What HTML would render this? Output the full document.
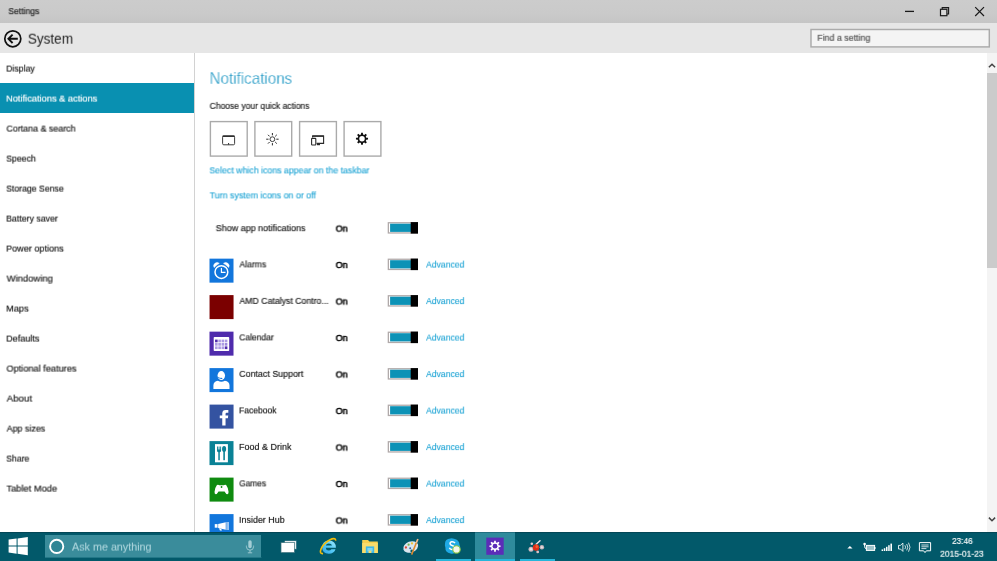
<!DOCTYPE html>
<html lang="en">
<head>
<meta charset="utf-8">
<title>Settings</title>
<style>
html,body{margin:0;padding:0}
body{width:997px;height:561px;overflow:hidden;background:#fff;position:relative;font-family:"Liberation Sans",sans-serif}
.a{position:absolute}
.t{position:absolute;left:0;top:0;white-space:pre;line-height:1;transform-origin:0 0;display:block;will-change:transform}
.t i{display:inline-block;font-style:normal;transform-origin:0 0}
svg{position:absolute;overflow:visible}
#titlebar{left:0;top:0;width:997px;height:23px;background:linear-gradient(#cccccc,#cacaca 60%,#c5c5c5)}
#header{left:0;top:23px;width:997px;height:30px;background:#e6e6e6}
#sidebar{left:0;top:53px;width:194px;height:479px;background:#fff;border-right:1px solid #d2d2d2}
#sel{left:0;top:83px;width:194px;height:30px;background:#0990b1}
#sbtrack{left:987px;top:53px;width:10px;height:479px;background:#f4f4f4}
#sbthumb{left:987px;top:73px;width:10px;height:195px;background:#cbcbcb}
#taskbar{left:0;top:532px;width:997px;height:29px;background:#02596a}
#cortana{left:45px;top:535px;width:216px;height:22px;background:#3a8c9b}
#tbactive{left:475px;top:532px;width:40px;height:29px;background:#2f8b9c}
.ul{position:absolute;top:559px;height:2px;background:#25b6da}
</style>
</head>
<body>
<!-- window chrome -->
<div id="titlebar" class="a"></div>
<div id="header" class="a"></div>
<svg style="left:800px;top:23px" width="197" height="30" viewBox="800 23 197 30"><rect x="811" y="29.5" width="178.3" height="17.4" fill="#f4f4f4" stroke="#ababab" stroke-width="1.45"/></svg>
<!-- window buttons -->
<svg style="left:900px;top:0" width="97" height="23" viewBox="900 0 97 23">
  <path d="M905 11.4H914" stroke="#1a1a1a" stroke-width="1.3" fill="none"/>
  <path d="M942.2 9.2V7.6H948.6V14H947" stroke="#1a1a1a" stroke-width="1.1" fill="none"/>
  <rect x="940.5" y="9.3" width="6.4" height="6.4" stroke="#1a1a1a" stroke-width="1.2" fill="#d8d8d8"/>
  <path d="M975.2 7.2L984 16M984 7.2L975.2 16" stroke="#1a1a1a" stroke-width="1.2" fill="none"/>
</svg>
<!-- back button -->
<svg style="left:0;top:23px" width="30" height="30" viewBox="0 23 30 30">
  <circle cx="12.8" cy="38.8" r="8" fill="none" stroke="#111" stroke-width="1.7"/>
  <path d="M8.6 38.8H17.8M12.6 34.6L8.4 38.8L12.6 43" fill="none" stroke="#111" stroke-width="1.9"/>
</svg>

<!-- sidebar -->
<div id="sidebar" class="a"></div>
<div id="sel" class="a"></div>

<!-- scrollbar -->
<div id="sbtrack" class="a"></div>
<div id="sbthumb" class="a"></div>
<svg style="left:987px;top:53px" width="10" height="478" viewBox="987 53 10 478">
  <path d="M988.9 67.3L992 64.2L995.1 67.3" fill="none" stroke="#444" stroke-width="1.5"/>
  <path d="M988.9 517.6L992 520.7L995.1 517.6" fill="none" stroke="#444" stroke-width="1.5"/>
</svg>

<!-- quick actions -->
<svg style="left:205px;top:115px" width="180" height="47" viewBox="205 115 180 47">
  <rect x="210.4" y="121.6" width="36.8" height="34.5" fill="#fff" stroke="#aaaaaa" stroke-width="1.4"/>
  <rect x="254.9" y="121.6" width="36.8" height="34.5" fill="#fff" stroke="#aaaaaa" stroke-width="1.4"/>
  <rect x="299.6" y="121.6" width="36.8" height="34.5" fill="#fff" stroke="#aaaaaa" stroke-width="1.4"/>
  <rect x="344.1" y="121.6" width="36.8" height="34.5" fill="#fff" stroke="#aaaaaa" stroke-width="1.4"/>
  <!-- tablet -->
  <rect x="222.6" y="136" width="12" height="8.8" rx="1.2" fill="none" stroke="#333" stroke-width="0.95"/>
  <path d="M222.6 136.2H234.6" stroke="#2a2a2a" stroke-width="1.5"/>
  <path d="M228.6 143V144.6" stroke="#2a2a2a" stroke-width="1"/>
  <!-- brightness -->
  <g stroke="#2a2a2a" stroke-width="1" fill="none">
    <circle cx="272.4" cy="139.2" r="2.4" stroke-width="0.9"/>
    <path d="M272.4 133V135.3M272.4 143.1V145.4M266.2 139.2H268.5M276.3 139.2H278.6M268 134.8L269.6 136.4M275.2 142L276.8 143.6M276.8 134.8L275.2 136.4M269.6 142L268 143.6"/>
  </g>
  <!-- connect -->
  <g stroke="#2a2a2a" fill="none">
    <path d="M312.6 137.5V136H323.6V143.4H316.6" stroke-width="1.1"/>
    <path d="M312.4 136.1H323.8" stroke-width="1.5"/>
    <rect x="311.6" y="138.4" width="4.2" height="6.6" rx="0.6" stroke-width="1.1" fill="#fff"/>
    <path d="M317 144.6H320" stroke-width="1.2"/>
  </g>
  <!-- gear -->
  <path d="M360.94 134.43L361.14 132.66L362.86 132.66L363.06 134.43L364.27 134.93L365.66 133.82L366.88 135.04L365.77 136.43L366.27 137.64L368.04 137.84L368.04 139.56L366.27 139.76L365.77 140.97L366.88 142.36L365.66 143.58L364.27 142.47L363.06 142.97L362.86 144.74L361.14 144.74L360.94 142.97L359.73 142.47L358.34 143.58L357.12 142.36L358.23 140.97L357.73 139.76L355.96 139.56L355.96 137.84L357.73 137.64L358.23 136.43L357.12 135.04L358.34 133.82L359.73 134.93Z" fill="#111"/>
  <circle cx="362" cy="138.7" r="2.75" fill="#fff"/>
</svg>

<!-- toggles -->
<svg style="left:380px;top:215px" width="45" height="316" viewBox="380 215 45 316">
  <g transform="translate(0 222.1)"><rect x="387.7" y="0" width="30.3" height="11.5" fill="#b1aaaa"/><rect x="389" y="1.3" width="22" height="8.9" fill="#fff"/><rect x="390.1" y="1.6" width="21" height="8.2" fill="#0c92b6"/><rect x="410.7" y="0" width="7.3" height="11.5" fill="#000"/></g>
  <g transform="translate(0 258.6)"><rect x="387.7" y="0" width="30.3" height="11.5" fill="#b1aaaa"/><rect x="389" y="1.3" width="22" height="8.9" fill="#fff"/><rect x="390.1" y="1.6" width="21" height="8.2" fill="#0c92b6"/><rect x="410.7" y="0" width="7.3" height="11.5" fill="#000"/></g>
  <g transform="translate(0 295.1)"><rect x="387.7" y="0" width="30.3" height="11.5" fill="#b1aaaa"/><rect x="389" y="1.3" width="22" height="8.9" fill="#fff"/><rect x="390.1" y="1.6" width="21" height="8.2" fill="#0c92b6"/><rect x="410.7" y="0" width="7.3" height="11.5" fill="#000"/></g>
  <g transform="translate(0 331.6)"><rect x="387.7" y="0" width="30.3" height="11.5" fill="#b1aaaa"/><rect x="389" y="1.3" width="22" height="8.9" fill="#fff"/><rect x="390.1" y="1.6" width="21" height="8.2" fill="#0c92b6"/><rect x="410.7" y="0" width="7.3" height="11.5" fill="#000"/></g>
  <g transform="translate(0 368.1)"><rect x="387.7" y="0" width="30.3" height="11.5" fill="#b1aaaa"/><rect x="389" y="1.3" width="22" height="8.9" fill="#fff"/><rect x="390.1" y="1.6" width="21" height="8.2" fill="#0c92b6"/><rect x="410.7" y="0" width="7.3" height="11.5" fill="#000"/></g>
  <g transform="translate(0 404.6)"><rect x="387.7" y="0" width="30.3" height="11.5" fill="#b1aaaa"/><rect x="389" y="1.3" width="22" height="8.9" fill="#fff"/><rect x="390.1" y="1.6" width="21" height="8.2" fill="#0c92b6"/><rect x="410.7" y="0" width="7.3" height="11.5" fill="#000"/></g>
  <g transform="translate(0 441.1)"><rect x="387.7" y="0" width="30.3" height="11.5" fill="#b1aaaa"/><rect x="389" y="1.3" width="22" height="8.9" fill="#fff"/><rect x="390.1" y="1.6" width="21" height="8.2" fill="#0c92b6"/><rect x="410.7" y="0" width="7.3" height="11.5" fill="#000"/></g>
  <g transform="translate(0 477.6)"><rect x="387.7" y="0" width="30.3" height="11.5" fill="#b1aaaa"/><rect x="389" y="1.3" width="22" height="8.9" fill="#fff"/><rect x="390.1" y="1.6" width="21" height="8.2" fill="#0c92b6"/><rect x="410.7" y="0" width="7.3" height="11.5" fill="#000"/></g>
  <g transform="translate(0 514.1)"><rect x="387.7" y="0" width="30.3" height="11.5" fill="#b1aaaa"/><rect x="389" y="1.3" width="22" height="8.9" fill="#fff"/><rect x="390.1" y="1.6" width="21" height="8.2" fill="#0c92b6"/><rect x="410.7" y="0" width="7.3" height="11.5" fill="#000"/></g>
</svg>

<!-- app icons -->
<svg style="left:205px;top:250px" width="40" height="281" viewBox="205 250 40 281">
  <!-- Alarms -->
  <g transform="translate(209.5 258.65)">
    <rect width="24" height="24" fill="#1276dc"/>
    <circle cx="11.9" cy="13.4" r="6.4" fill="none" stroke="#fff" stroke-width="1.5"/>
    <path d="M11.9 9.3V13.8H16" fill="none" stroke="#fff" stroke-width="1.15"/>
    <path d="M4.6 8.9A3.4 3.4 0 0 1 9.8 4.7Q7.4 6.2 4.6 8.9Z" fill="#fff" stroke="#fff" stroke-width="0.5"/>
    <path d="M19.2 8.9A3.4 3.4 0 0 0 14 4.7Q16.4 6.2 19.2 8.9Z" fill="#fff" stroke="#fff" stroke-width="0.5"/>
  </g>
  <!-- AMD -->
  <g transform="translate(209.55 295.1)"><rect width="24" height="24" fill="#7b0000"/></g>
  <!-- Calendar -->
  <g transform="translate(209.5 331.65)">
    <rect width="24" height="24" fill="#4f2bac"/>
    <rect x="4.2" y="5.3" width="15.5" height="14" rx="0.8" fill="#fff"/>
    <rect x="5.55" y="7.95" width="2.6" height="2.7" fill="#4f2bac"/><rect x="8.80" y="7.95" width="2.6" height="2.7" fill="#ab9be3"/><rect x="12.05" y="7.95" width="2.6" height="2.7" fill="#ab9be3"/><rect x="15.30" y="7.95" width="2.6" height="2.7" fill="#ab9be3"/><rect x="5.55" y="11.35" width="2.6" height="2.7" fill="#ab9be3"/><rect x="8.80" y="11.35" width="2.6" height="2.7" fill="#ab9be3"/><rect x="12.05" y="11.35" width="2.6" height="2.7" fill="#ab9be3"/><rect x="15.30" y="11.35" width="2.6" height="2.7" fill="#9d8adb"/><rect x="5.55" y="14.75" width="2.6" height="2.7" fill="#ab9be3"/><rect x="8.80" y="14.75" width="2.6" height="2.7" fill="#ab9be3"/><rect x="12.05" y="14.75" width="2.6" height="2.7" fill="#ab9be3"/><rect x="15.30" y="14.75" width="2.6" height="2.7" fill="#4f2bac"/>
  </g>
  <!-- Contact Support -->
  <g transform="translate(209.5 368.1)">
    <rect width="24" height="24" fill="#1276dc"/>
    <path d="M3.9 20.9V17.2Q4.1 13.4 8.4 12.7Q11.8 14.6 15.4 12.7Q19.8 13.4 20 17.2V20.9Z" fill="#fff"/>
    <ellipse cx="11.8" cy="7.5" rx="3.75" ry="4.5" fill="#fff"/>
    <path d="M8.6 8.8Q9.2 10.4 11.6 10.3" stroke="#1276dc" stroke-width="0.8" fill="none"/>
    <ellipse cx="12" cy="10.3" rx="0.9" ry="0.7" fill="#1276dc"/>
  </g>
  <!-- Facebook -->
  <g transform="translate(209.55 404.6)">
    <rect width="24" height="24" fill="#3453a1"/>
    <path d="M12.7 21V13.7H10.2V10.9H12.7V8.8Q12.7 5.4 16.2 5.4H18.8V8.2H17Q16 8.2 16 9.3V10.9H18.7L18.3 13.7H16V21Z" fill="#fff"/>
  </g>
  <!-- Food & Drink -->
  <g transform="translate(209.5 441.1)">
    <rect width="24" height="24" fill="#0a8296"/>
    <rect x="5.5" y="3" width="12.9" height="18.2" fill="#fff"/>
    <g fill="#0a8296" transform="translate(-0.3 0.3)">
      <path d="M7.8 5H8.7V8.2H9.4V5H10.3V8.2H11V5H11.9V9.2Q11.9 10.6 10.6 10.9V18.8H9.1V10.9Q7.8 10.6 7.8 9.2Z"/>
      <ellipse cx="14.9" cy="7.6" rx="2.05" ry="2.9"/>
      <rect x="14.1" y="9.6" width="1.6" height="9.2"/>
    </g>
  </g>
  <!-- Games -->
  <g transform="translate(209.55 477.6)">
    <rect width="24" height="24" fill="#0f8b10"/>
    <path d="M7.4 7.4Q8.6 6.6 9.8 7.6H14.2Q15.4 6.6 16.6 7.4Q18.4 9.6 19 14.2Q19.2 16.4 17.8 16.6Q16.6 16.6 15 13.8H9Q7.4 16.6 6.2 16.6Q4.8 16.4 5 14.2Q5.6 9.6 7.4 7.4Z" fill="#fff"/>
    <circle cx="12" cy="9.4" r="0.9" fill="#0f8b10"/>
  </g>
  <!-- Insider Hub -->
  <g transform="translate(209.55 514.1)">
    <rect width="24" height="24" fill="#1276dc"/>
    <g fill="#fff">
      <path d="M5.2 10H8V13.6H5.2Z"/>
      <path d="M8.6 9.8L16.2 8.2V15.6L8.6 13.8Z"/>
      <path d="M17 8H18V15.8H17Z"/>
      <path d="M18.8 8H19.4V15.8H18.8Z"/>
      <path d="M9.4 14.2L10.4 16.4H12.4L11.6 14.6Z"/>
    </g>
  </g>
</svg>

<!-- taskbar -->
<div id="taskbar" class="a"></div>
<div id="cortana" class="a"></div>
<div id="tbactive" class="a"></div>
<div class="ul" style="left:436px;width:35px"></div>
<div class="ul" style="left:475px;width:40px"></div>
<div class="ul" style="left:520px;width:34.5px"></div>
<svg style="left:0;top:531px" width="997" height="30" viewBox="0 531 997 30">
  <rect x="0" y="532" width="997" height="1" fill="#034756"/>
  <rect x="0" y="533" width="997" height="1" fill="#03566a" opacity=".6"/>
  <rect x="475" y="532" width="40" height="1" fill="#226f80"/>
  <rect x="475" y="533" width="40" height="1" fill="#2f8b9c"/>
  <rect x="45" y="557" width="216.4" height="0.6" fill="#3a8c9b"/>
  <!-- windows logo -->
  <g fill="#fff">
    <path d="M8.6 539.6L16.6 538.5V545.6H8.6Z"/>
    <path d="M17.6 538.4L27.8 537V545.6H17.6Z"/>
    <path d="M8.6 546.6H16.6V553.7L8.6 552.6Z"/>
    <path d="M17.6 546.6H27.8V555.2L17.6 553.8Z"/>
  </g>
  <!-- cortana ring -->
  <circle cx="56.7" cy="546.4" r="6.6" fill="#2f8595" stroke="#fff" stroke-width="1.9"/>
  <!-- mic -->
  <g stroke="#a4cdd5" fill="none">
    <rect x="248.3" y="540.2" width="3.4" height="8" rx="1.7" fill="#a4cdd5" stroke="none"/>
    <path d="M246.4 545.6V546.6A3.6 3.6 0 0 0 253.6 546.6V545.6" stroke-width="0.9"/>
    <path d="M250 550.2V552.6M247.8 552.8H252.2" stroke-width="0.9"/>
  </g>
  <!-- task view -->
  <rect x="284.4" y="540.6" width="12.2" height="8.6" fill="#e9edee" stroke="#05596b" stroke-width="0.6"/>
  <rect x="281" y="542.6" width="13.4" height="10" fill="#fff" stroke="#3a6f7a" stroke-width="0.7"/>
  <!-- IE -->
  <defs><linearGradient id="ieg" x1="0" y1="1" x2="1" y2="0"><stop offset="0" stop-color="#2aa3ea"/><stop offset=".55" stop-color="#5bcdf7"/><stop offset="1" stop-color="#a6e8fb"/></linearGradient></defs>
  <g>
    <path transform="translate(0.9 0.9)" d="M335 546.9H324.8Q325 549.5 327.7 549.7Q329.6 549.7 330.5 548.3H334.6Q333.2 552.7 327.9 552.9Q321.2 552.5 321.2 546Q321.6 540 327.9 539.6Q335 539.8 335 546.9ZM324.9 544.5H331.1Q330.7 542.6 328 542.5Q325.4 542.6 324.9 544.5Z" fill="url(#ieg)"/>
    <path d="M323 553.6Q319 553.8 321.2 548.6Q323.8 543.2 329.6 540Q335.4 537 335.8 540.6" fill="none" stroke="#f4bd0c" stroke-width="1.6"/>
  </g>
  <!-- folder -->
  <g>
    <path d="M362.2 540H368L369.4 541.6H377.8V553H362.2Z" fill="#f7d04f"/>
    <path d="M362.2 543H377.8V553H362.2Z" fill="#f9dc6b"/>
    <rect x="365.8" y="546.4" width="8.4" height="6.6" fill="#3fb8e6"/>
    <rect x="367.4" y="548" width="5.2" height="3.4" fill="#7fd6f2"/>
    <rect x="368.6" y="550.6" width="2.8" height="2.4" fill="#f9dc6b"/>
  </g>
  <!-- paint -->
  <g>
    <ellipse cx="410.7" cy="547" rx="7.7" ry="5.5" transform="rotate(-20 410.7 547)" fill="#d9e5ee"/>
    <path d="M411 552.6Q409.4 550.4 411.6 549.6Q413.6 549.4 413.4 552Z" fill="#02596a"/>
    <circle cx="405.9" cy="547.5" r="1.15" fill="#e0483a"/>
    <circle cx="408.6" cy="544.7" r="1.1" fill="#79b84a"/>
    <circle cx="412" cy="543.4" r="1.15" fill="#f0c233"/>
    <circle cx="410.2" cy="548.2" r="0.95" fill="#2d5fae"/>
    <path d="M411.6 554.6L416.4 542.6" stroke="#e08a2c" stroke-width="1.5"/>
    <path d="M416.3 542.9L417.9 539" stroke="#f2b98a" stroke-width="1.7"/>
  </g>
  <!-- skype -->
  <g>
    <path d="M445 543.6Q445 538.6 450.4 538.4Q452.4 538 454 538.8Q459.2 539.6 459.6 545Q460.6 547 460 549Q458.8 553.6 454.4 553.2Q452.6 554 450.6 553.4Q445 552.6 445.4 547.4Q444.6 545.6 445 543.6Z" fill="#1fa9e4"/>
    <path d="M455 543.2Q453.8 541.4 451.6 541.8Q449.6 542.4 450.2 544.2Q450.8 545.4 452.8 545.8Q454.8 546.4 454.6 548Q454 549.8 451.8 549.6Q450 549.4 449.4 547.8" fill="none" stroke="#fff" stroke-width="1.5"/>
    <circle cx="456.5" cy="549.4" r="3.7" fill="#f3f6ea" stroke="#86c440" stroke-width="1.1"/>
  </g>
  <!-- settings tile -->
  <rect x="486.3" y="537.6" width="17.4" height="17.2" fill="#5b2db8"/>
  <g>
    <path d="M494.06 542.42L494.21 540.66L495.79 540.66L495.94 542.42L497.01 542.86L498.36 541.72L499.48 542.84L498.34 544.19L498.78 545.26L500.54 545.41L500.54 546.99L498.78 547.14L498.34 548.21L499.48 549.56L498.36 550.68L497.01 549.54L495.94 549.98L495.79 551.74L494.21 551.74L494.06 549.98L492.99 549.54L491.64 550.68L490.52 549.56L491.66 548.21L491.22 547.14L489.46 546.99L489.46 545.41L491.22 545.26L491.66 544.19L490.52 542.84L491.64 541.72L492.99 542.86Z" fill="#fff"/>
    <circle cx="495" cy="546.2" r="2.4" fill="#5b2db8"/>
  </g>
  <!-- molecule-ish app -->
  <g>
    <path d="M536.2 544.2L540 540.8" stroke="#ece6ea" stroke-width="1.5" stroke-linecap="round"/>
    <circle cx="531.8" cy="543.8" r="1.3" fill="#dccdd2"/>
    <circle cx="537.7" cy="551.9" r="1.4" fill="#d9c4c6"/>
    <circle cx="531" cy="549.2" r="2.5" fill="#c9b8be"/>
    <circle cx="531" cy="549.2" r="1.2" fill="#e9e2e4"/>
    <circle cx="541.9" cy="547.3" r="2.2" fill="#c9b8be"/>
    <circle cx="541.9" cy="547.3" r="1" fill="#e9e2e4"/>
    <ellipse cx="536" cy="547.5" rx="3.2" ry="3.3" fill="#df2c18"/>
    <ellipse cx="536.8" cy="546.6" rx="1.3" ry="1.6" fill="#f0602c"/>
  </g>
  <!-- tray: chevron -->
  <path d="M847.3 548.6L849.9 546L852.5 548.6Z" fill="#fff"/>
  <!-- power/plug -->
  <g fill="none" stroke="#fff">
    <rect x="866.4" y="545.4" width="8.2" height="5" stroke-width="1" fill="#9cc3cb"/>
    <path d="M874.9 547V549" stroke-width="1.2"/>
    <path d="M864.6 543.4V546.2Q864.6 548.6 866.4 548.8" stroke-width="1"/>
    <circle cx="864.6" cy="544" r="1.3" fill="#fff" stroke="none"/>
  </g>
  <!-- signal -->
  <g fill="#fff">
    <rect x="881.6" y="549.4" width="1.5" height="1.6"/>
    <rect x="883.8" y="548.2" width="1.5" height="2.8"/>
    <rect x="886" y="546.8" width="1.5" height="4.2"/>
    <rect x="888.2" y="545.2" width="1.5" height="5.8"/>
    <rect x="890.4" y="543.6" width="1.6" height="7.4"/>
  </g>
  <!-- volume -->
  <g fill="none" stroke="#fff" stroke-width="0.85">
    <path d="M898.5 545.4H900.5L902.9 543V551.4L900.5 549H898.5Z"/>
    <path d="M904.9 545.3Q906.3 547.2 904.9 549.1" stroke-width="0.8"/>
    <path d="M906.7 544Q908.9 547.2 906.7 550.4" stroke-width="0.8"/>
    <path d="M908.5 542.7Q911.5 547.2 908.5 551.7" stroke-width="0.8"/>
  </g>
  <!-- action center -->
  <g fill="none" stroke="#fff" stroke-width="1">
    <path d="M919.4 542.6H930.6V550.8H926.4L925 552.6L923.6 550.8H919.4Z"/>
    <path d="M921.4 545H928.6M921.4 546.8H928.6M921.4 548.6H926.4" stroke-width="0.8"/>
  </g>
</svg>

<!-- text -->
<div id="txt">
<span class="t" style="font-size:9.8px;color:#151515;-webkit-text-stroke:0.16px #151515;transform:translate(8.35px,6.20px) rotate(.001deg)"><i style="transform:scaleX(0.8778)">Settings</i></span>
<span class="t" style="font-size:14.5px;color:#222;transform:translate(27.81px,31.70px) rotate(.001deg)"><i style="transform:scaleX(0.9345)">System</i></span>
<span class="t" style="font-size:9.8px;color:#4a4a4a;-webkit-text-stroke:0.16px #4a4a4a;transform:translate(817.29px,32.80px) rotate(.001deg)"><i style="transform:scaleX(0.9035)">Find a setting</i></span>
<span class="t" style="font-size:9.8px;color:#101010;-webkit-text-stroke:0.16px #101010;transform:translate(6.20px,63.60px) rotate(.001deg)"><i style="transform:scaleX(0.8922)">Display</i></span>
<span class="t" style="font-size:9.8px;color:#ffffff;-webkit-text-stroke:0.16px #ffffff;transform:translate(6.15px,93.60px) rotate(.001deg)"><i style="transform:scaleX(0.9469)">Notifications &amp; actions</i></span>
<span class="t" style="font-size:9.8px;color:#101010;-webkit-text-stroke:0.16px #101010;transform:translate(6.41px,123.60px) rotate(.001deg)"><i style="transform:scaleX(0.9084)">Cortana &amp; search</i></span>
<span class="t" style="font-size:9.8px;color:#101010;-webkit-text-stroke:0.16px #101010;transform:translate(6.24px,153.60px) rotate(.001deg)"><i style="transform:scaleX(0.8943)">Speech</i></span>
<span class="t" style="font-size:9.8px;color:#101010;-webkit-text-stroke:0.16px #101010;transform:translate(6.24px,183.60px) rotate(.001deg)"><i style="transform:scaleX(0.8866)">Storage Sense</i></span>
<span class="t" style="font-size:9.8px;color:#101010;-webkit-text-stroke:0.16px #101010;transform:translate(6.19px,213.60px) rotate(.001deg)"><i style="transform:scaleX(0.8972)">Battery saver</i></span>
<span class="t" style="font-size:9.8px;color:#101010;-webkit-text-stroke:0.16px #101010;transform:translate(6.17px,243.60px) rotate(.001deg)"><i style="transform:scaleX(0.9281)">Power options</i></span>
<span class="t" style="font-size:9.8px;color:#101010;-webkit-text-stroke:0.16px #101010;transform:translate(6.61px,273.60px) rotate(.001deg)"><i style="transform:scaleX(0.9663)">Windowing</i></span>
<span class="t" style="font-size:9.8px;color:#101010;-webkit-text-stroke:0.16px #101010;transform:translate(6.16px,303.60px) rotate(.001deg)"><i style="transform:scaleX(0.9390)">Maps</i></span>
<span class="t" style="font-size:9.8px;color:#101010;-webkit-text-stroke:0.16px #101010;transform:translate(6.17px,333.60px) rotate(.001deg)"><i style="transform:scaleX(0.9283)">Defaults</i></span>
<span class="t" style="font-size:9.8px;color:#101010;-webkit-text-stroke:0.16px #101010;transform:translate(6.43px,363.60px) rotate(.001deg)"><i style="transform:scaleX(0.9396)">Optional features</i></span>
<span class="t" style="font-size:9.8px;color:#101010;-webkit-text-stroke:0.16px #101010;transform:translate(6.66px,393.60px) rotate(.001deg)"><i style="transform:scaleX(0.9908)">About</i></span>
<span class="t" style="font-size:9.8px;color:#101010;-webkit-text-stroke:0.16px #101010;transform:translate(6.67px,423.60px) rotate(.001deg)"><i style="transform:scaleX(0.9070)">App sizes</i></span>
<span class="t" style="font-size:9.8px;color:#101010;-webkit-text-stroke:0.16px #101010;transform:translate(6.24px,453.60px) rotate(.001deg)"><i style="transform:scaleX(0.8877)">Share</i></span>
<span class="t" style="font-size:9.8px;color:#101010;-webkit-text-stroke:0.16px #101010;transform:translate(6.46px,483.60px) rotate(.001deg)"><i style="transform:scaleX(0.9489)">Tablet Mode</i></span>
<span class="t" style="font-size:17px;color:#2199c5;-webkit-text-stroke:0.26px #fff;transform:translate(209.52px,70.00px) rotate(.001deg)"><i style="transform:scaleX(0.8932)">Notifications</i></span>
<span class="t" style="font-size:9.8px;color:#141414;-webkit-text-stroke:0.16px #141414;transform:translate(209.63px,100.90px) rotate(.001deg)"><i style="transform:scaleX(0.8691)">Choose your quick actions</i></span>
<span class="t" style="font-size:9.8px;color:#15a0d3;-webkit-text-stroke:0.1px #15a0d3;transform:translate(209.42px,165.40px) rotate(.001deg)"><i style="transform:scaleX(0.8956)">Select which icons appear on the taskbar</i></span>
<span class="t" style="font-size:9.8px;color:#15a0d3;-webkit-text-stroke:0.1px #15a0d3;transform:translate(209.66px,190.40px) rotate(.001deg)"><i style="transform:scaleX(0.9032)">Turn system icons on or off</i></span>
<span class="t" style="font-size:9.8px;color:#101010;-webkit-text-stroke:0.16px #101010;transform:translate(215.72px,223.20px) rotate(.001deg)"><i style="transform:scaleX(0.9152)">Show app notifications</i></span>
<span class="t" style="font-size:9.8px;color:#000;-webkit-text-stroke:0.52px #000;transform:translate(335.68px,223.60px) rotate(.001deg)"><i style="transform:scaleX(0.9119)">On</i></span>
<span class="t" style="font-size:9.8px;color:#101010;-webkit-text-stroke:0.16px #101010;transform:translate(239.47px,259.40px) rotate(.001deg)"><i style="transform:scaleX(0.8765)">Alarms</i></span>
<span class="t" style="font-size:9.8px;color:#000;-webkit-text-stroke:0.52px #000;transform:translate(335.68px,260.00px) rotate(.001deg)"><i style="transform:scaleX(0.9119)">On</i></span>
<span class="t" style="font-size:9.8px;color:#15a0d3;-webkit-text-stroke:0.1px #15a0d3;transform:translate(426.14px,259.60px) rotate(.001deg)"><i style="transform:scaleX(0.8794)">Advanced</i></span>
<span class="t" style="font-size:9.8px;color:#101010;-webkit-text-stroke:0.16px #101010;transform:translate(239.47px,295.90px) rotate(.001deg)"><i style="transform:scaleX(0.8910)">AMD Catalyst Contro...</i></span>
<span class="t" style="font-size:9.8px;color:#000;-webkit-text-stroke:0.52px #000;transform:translate(335.68px,296.50px) rotate(.001deg)"><i style="transform:scaleX(0.9119)">On</i></span>
<span class="t" style="font-size:9.8px;color:#15a0d3;-webkit-text-stroke:0.1px #15a0d3;transform:translate(426.14px,296.10px) rotate(.001deg)"><i style="transform:scaleX(0.8794)">Advanced</i></span>
<span class="t" style="font-size:9.8px;color:#101010;-webkit-text-stroke:0.16px #101010;transform:translate(239.23px,332.40px) rotate(.001deg)"><i style="transform:scaleX(0.8700)">Calendar</i></span>
<span class="t" style="font-size:9.8px;color:#000;-webkit-text-stroke:0.52px #000;transform:translate(335.68px,333.00px) rotate(.001deg)"><i style="transform:scaleX(0.9119)">On</i></span>
<span class="t" style="font-size:9.8px;color:#15a0d3;-webkit-text-stroke:0.1px #15a0d3;transform:translate(426.14px,332.60px) rotate(.001deg)"><i style="transform:scaleX(0.8794)">Advanced</i></span>
<span class="t" style="font-size:9.8px;color:#101010;-webkit-text-stroke:0.16px #101010;transform:translate(239.21px,368.90px) rotate(.001deg)"><i style="transform:scaleX(0.9083)">Contact Support</i></span>
<span class="t" style="font-size:9.8px;color:#000;-webkit-text-stroke:0.52px #000;transform:translate(335.68px,369.50px) rotate(.001deg)"><i style="transform:scaleX(0.9119)">On</i></span>
<span class="t" style="font-size:9.8px;color:#15a0d3;-webkit-text-stroke:0.1px #15a0d3;transform:translate(426.14px,369.10px) rotate(.001deg)"><i style="transform:scaleX(0.8794)">Advanced</i></span>
<span class="t" style="font-size:9.8px;color:#101010;-webkit-text-stroke:0.16px #101010;transform:translate(239.01px,405.40px) rotate(.001deg)"><i style="transform:scaleX(0.8744)">Facebook</i></span>
<span class="t" style="font-size:9.8px;color:#000;-webkit-text-stroke:0.52px #000;transform:translate(335.68px,406.00px) rotate(.001deg)"><i style="transform:scaleX(0.9119)">On</i></span>
<span class="t" style="font-size:9.8px;color:#15a0d3;-webkit-text-stroke:0.1px #15a0d3;transform:translate(426.14px,405.60px) rotate(.001deg)"><i style="transform:scaleX(0.8794)">Advanced</i></span>
<span class="t" style="font-size:9.8px;color:#101010;-webkit-text-stroke:0.16px #101010;transform:translate(238.98px,441.90px) rotate(.001deg)"><i style="transform:scaleX(0.9179)">Food &amp; Drink</i></span>
<span class="t" style="font-size:9.8px;color:#000;-webkit-text-stroke:0.52px #000;transform:translate(335.68px,442.50px) rotate(.001deg)"><i style="transform:scaleX(0.9119)">On</i></span>
<span class="t" style="font-size:9.8px;color:#15a0d3;-webkit-text-stroke:0.1px #15a0d3;transform:translate(426.14px,442.10px) rotate(.001deg)"><i style="transform:scaleX(0.8794)">Advanced</i></span>
<span class="t" style="font-size:9.8px;color:#101010;-webkit-text-stroke:0.16px #101010;transform:translate(239.26px,478.40px) rotate(.001deg)"><i style="transform:scaleX(0.8495)">Games</i></span>
<span class="t" style="font-size:9.8px;color:#000;-webkit-text-stroke:0.52px #000;transform:translate(335.68px,479.00px) rotate(.001deg)"><i style="transform:scaleX(0.9119)">On</i></span>
<span class="t" style="font-size:9.8px;color:#15a0d3;-webkit-text-stroke:0.1px #15a0d3;transform:translate(426.14px,478.60px) rotate(.001deg)"><i style="transform:scaleX(0.8794)">Advanced</i></span>
<span class="t" style="font-size:9.8px;color:#101010;-webkit-text-stroke:0.16px #101010;transform:translate(238.96px,514.90px) rotate(.001deg)"><i style="transform:scaleX(0.9127)">Insider Hub</i></span>
<span class="t" style="font-size:9.8px;color:#000;-webkit-text-stroke:0.52px #000;transform:translate(335.68px,515.50px) rotate(.001deg)"><i style="transform:scaleX(0.9119)">On</i></span>
<span class="t" style="font-size:9.8px;color:#15a0d3;-webkit-text-stroke:0.1px #15a0d3;transform:translate(426.14px,515.10px) rotate(.001deg)"><i style="transform:scaleX(0.8794)">Advanced</i></span>
<span class="t" style="font-size:10.7px;color:#a9d3da;-webkit-text-stroke:0.1px #a9d3da;transform:translate(72.00px,541.60px) rotate(.001deg)"><i style="transform:scaleX(1.0071)">Ask me anything</i></span>
<span class="t" style="font-size:9.8px;color:#ffffff;-webkit-text-stroke:0.15px #ffffff;transform:translate(952.20px,536.00px) rotate(.001deg)"><i style="transform:scaleX(0.8353)">23:46</i></span>
<span class="t" style="font-size:9.8px;color:#ffffff;-webkit-text-stroke:0.15px #ffffff;transform:translate(940.18px,548.80px) rotate(.001deg)"><i style="transform:scaleX(0.8680)">2015-01-23</i></span>
</div>
</body>
</html>
